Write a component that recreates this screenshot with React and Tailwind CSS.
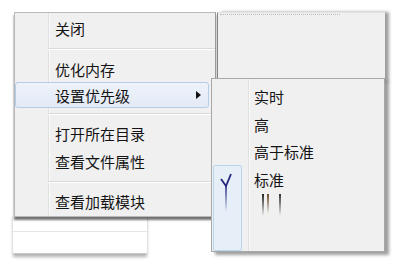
const mainItems = [
  { type: 'item', label: '关闭', h: 'h-[27px]' },
  { type: 'sep', h: 'h-[14px]' },
  { type: 'item', label: '优化内存', h: 'h-[26px]' },
  { type: 'item', label: '设置优先级', h: 'h-[26px]', active: true, sub: true },
  { type: 'sep', h: 'h-[12px]' },
  { type: 'item', label: '打开所在目录', h: 'h-[27px]' },
  { type: 'item', label: '查看文件属性', h: 'h-[28px]' },
  { type: 'sep', h: 'h-[14px]' },
  { type: 'item', label: '查看加载模块', h: 'h-[24px]' }
];

const subItems = [
  { label: '实时', h: 'h-[28px]' },
  { label: '高', h: 'h-[28px]' },
  { label: '高于标准', h: 'h-[27px]' },
  { label: '标准', h: 'h-[29px]', checked: true }
];

function MainMenu() {
  return (
    <div className="absolute left-[14px] top-[12px] w-[202px] h-[205px] border border-[#b8b8b8] border-r-[#9a9a9a] bg-[#f0f0f0] pt-[2px] shadow-[0_3px_2px_rgba(0,0,0,0.55)] bg-[linear-gradient(90deg,transparent_33px,#e0e0e0_33px,#e0e0e0_34px,#fafafa_34px,#fafafa_35px,transparent_35px)]">
      {mainItems.map((it, i) =>
        it.type === 'sep' ? (
          <div key={i} className={`flex items-center pl-[33px] ${it.h}`}>
            <div className="w-full h-[2px] border-t border-[#d9d9d9] border-b border-b-white" />
          </div>
        ) : (
          <div
            key={i}
            className={`flex items-center mr-[6px] ${it.h} ${
              it.active
                ? 'rounded-[3px] border border-[#b4cdea] bg-[linear-gradient(#eef3fa,#e2eaf5)] pl-[39px]'
                : 'pl-[40px]'
            }`}
          >
            <span className="text-[15px] leading-none text-[#141414]">{it.label}</span>
            {it.sub && (
              <span className="ml-auto mr-[7px] w-0 h-0 border-y-[4px] border-y-transparent border-l-[5px] border-l-[#111]" />
            )}
          </div>
        )
      )}
    </div>
  );
}

function CheckColumn() {
  return (
    <div className="w-[29px] h-[86px] ml-[1px] rounded-[2px] border border-[#bcd3ee] bg-[#e6eef8]">
      <svg width="27" height="50" viewBox="0 0 27 50">
        <defs>
          <linearGradient id="fade" x1="0" y1="0" x2="0" y2="1">
            <stop offset="0" stopColor="#23237e" />
            <stop offset="1" stopColor="#23237e" stopOpacity="0" />
          </linearGradient>
        </defs>
        <path d="M7 13 L12 20 L17 8" fill="none" stroke="#23237e" strokeWidth="1.8" strokeLinejoin="round" />
        <rect x="11.2" y="20" width="1.6" height="26" fill="url(#fade)" />
      </svg>
    </div>
  );
}

function SubMenu() {
  return (
    <div className="absolute left-[211px] top-[78px] w-[174px] h-[174px] border border-[#a8a8a8] bg-[#f0f0f0] shadow-[4px_3px_3px_rgba(0,0,0,0.38)] bg-[linear-gradient(90deg,transparent_36px,#e0e0e0_36px,#e0e0e0_37px,#fafafa_37px,#fafafa_38px,transparent_38px)] flex">
      <div className="flex flex-col justify-end w-[36px]">
        <CheckColumn />
      </div>
      <div className="flex flex-col pt-[3px]">
        {subItems.map((it, i) => (
          <div key={i} className={`flex items-center pl-[6px] ${it.h}`}>
            <span className="text-[15px] leading-none text-[#141414]">{it.label}</span>
          </div>
        ))}
        <div className="flex gap-[3px] pl-[14px]">
          <div className="w-[2px] h-[22px] bg-[linear-gradient(#222,transparent)]" />
          <div className="w-[2px] h-[20px] bg-[linear-gradient(#6b4b2a,transparent)]" />
          <div className="w-[4px]" />
          <div className="w-[2px] h-[22px] bg-[linear-gradient(#333,transparent)]" />
        </div>
      </div>
    </div>
  );
}

export default function App() {
  return (
    <div className="relative w-[400px] h-[268px] overflow-hidden bg-white font-['Noto_Sans_CJK_SC',sans-serif]">
      {/* window behind, top right */}
      <div className="absolute left-[217px] top-[12px] w-[168px] h-[70px] border-l border-[#8a8a8a] border-t border-t-[#e2e2e2] bg-[#f0f0f0] shadow-[4px_0_3px_rgba(0,0,0,0.38)] pt-[1px] pl-[2px]">
        <div className="w-[120px] border-t border-dotted border-[#b8b8b8]" />
      </div>
      {/* window behind, bottom left */}
      <div className="absolute left-[13px] top-[214px] w-[134px] h-[40px] bg-white border-b border-[#c8c8c8] shadow-[0_3px_3px_rgba(0,0,0,0.3)] pt-[17px]">
        <div className="border-t border-[#e6e6e6]" />
      </div>
      <MainMenu />
      <SubMenu />
    </div>
  );
}
